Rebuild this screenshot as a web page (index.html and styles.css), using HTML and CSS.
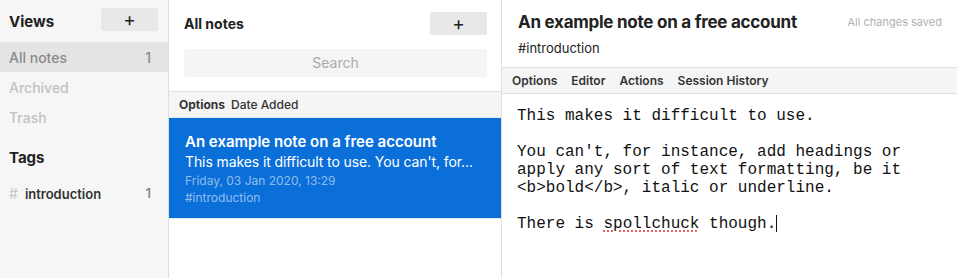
FILE: index.html
```html
<!DOCTYPE html>
<html lang="en">
<head>
    <meta charset="UTF-8">
    <title>Notes</title>
    <link rel="stylesheet" href="styles.css">
</head>
<body>
    <div class="sidebar">
        <div class="side-header">
            <h2>Views</h2>
            <button class="add-btn">+</button>
        </div>
        <div class="side-item active"><span>All notes</span><span class="count">1</span></div>
        <div class="side-item muted"><span>Archived</span></div>
        <div class="side-item muted"><span>Trash</span></div>
        <h2 class="tags-title">Tags</h2>
        <div class="side-item tag"><span><span class="hash">#</span>introduction</span><span class="count">1</span></div>
    </div>

    <div class="notes">
        <div class="notes-header">
            <div class="notes-title-row">
                <h2>All notes</h2>
                <button class="add-btn">+</button>
            </div>
            <div class="search">Search</div>
        </div>
        <div class="options-bar">
            <b>Options</b><span>Date Added</span>
        </div>
        <div class="note selected">
            <div class="note-title">An example note on a free account</div>
            <div class="note-preview">This makes it difficult to use. You can't, for...</div>
            <div class="note-date">Friday, 03 Jan 2020, 13:29</div>
            <div class="note-tag">#introduction</div>
        </div>
    </div>

    <div class="editor">
        <div class="editor-header">
            <div>
                <h1>An example note on a free account</h1>
                <div class="editor-tag">#introduction</div>
            </div>
            <div class="saved">All changes saved</div>
        </div>
        <div class="editor-menu">
            <span>Options</span><span>Editor</span><span>Actions</span><span>Session History</span>
        </div>
        <div class="editor-body">
            <p>This makes it difficult to use.</p>
            <p>You can't, for instance, add headings or<br>apply any sort of text formatting, be it<br>&lt;b&gt;bold&lt;/b&gt;, italic or underline.</p>
            <p>There is <span class="misspelled">spollchuck</span> though.<span class="caret"></span></p>
        </div>
    </div>
</body>
</html>
```

FILE: styles.css
```css
html, body {
    margin: 0;
    height: 100%;
}
body {
    display: flex;
    font-family: Inter, "Noto Sans", sans-serif;
    color: #222;
    background: #fff;
    overflow: hidden;
}
h1, h2, p {
    margin: 0;
}
.add-btn {
    width: 57px;
    height: 23px;
    border: none;
    border-radius: 2px;
    background-color: #e8e8e8;
    color: #222;
    font-family: inherit;
    font-size: 19px;
    line-height: 23px;
    padding: 0;
}

/* sidebar */
.sidebar {
    width: 168px;
    flex-shrink: 0;
    background-color: #f6f6f6;
    border-right: 1px solid #e0e0e0;
}
.side-header {
    display: flex;
    align-items: center;
    justify-content: space-between;
    height: 42px;
    padding: 0 10px 0 9px;
    box-sizing: border-box;
}
.side-header h2,
.tags-title {
    font-size: 15px;
    font-weight: 700;
}
.side-header .add-btn {
    margin-bottom: 3px;
}
.side-item {
    display: flex;
    justify-content: space-between;
    align-items: center;
    height: 30px;
    padding: 0 17px 0 9px;
    font-size: 14px;
    font-weight: 500;
}
.side-item.active {
    background-color: #e4e4e4;
    color: #8a8a8a;
}
.side-item.muted {
    color: #c2c2c2;
}
.side-item .count {
    color: #8a8a8a;
}
.tags-title {
    padding: 16px 9px 10px;
    line-height: 20px;
}
.side-item.tag {
    height: 30px;
    color: #333;
    font-weight: 600;
    font-size: 13px;
}
.hash {
    color: #c4c4c4;
    font-weight: 400;
    margin-right: 7px;
    font-size: 14px;
}

/* notes list */
.notes {
    width: 332px;
    flex-shrink: 0;
    border-right: 1px solid #e0e0e0;
}
.notes-header {
    padding: 12px 14px 14px 15px;
    border-bottom: 1px solid #e0e0e0;
}
.notes-title-row {
    display: flex;
    justify-content: space-between;
    align-items: center;
}
.notes-title-row h2 {
    font-size: 14px;
    font-weight: 700;
}
.search {
    margin-top: 14px;
    height: 28px;
    line-height: 28px;
    background-color: #f5f5f5;
    border-radius: 2px;
    text-align: center;
    color: #aaa;
    font-size: 14px;
}
.options-bar {
    display: flex;
    gap: 6px;
    align-items: center;
    height: 25px;
    padding: 0 10px;
    background-color: #f5f5f5;
    border-bottom: 1px solid #e6e6e6;
    font-size: 12px;
    color: #333;
}
.options-bar span {
    font-weight: 500;
}
.note {
    padding: 14px 16px 12px;
    border-bottom: 1px solid #e6e6e6;
}
.note.selected {
    background-color: #0b6fd9;
    color: #fff;
}
.note-title {
    font-size: 15px;
    font-weight: 600;
    line-height: 20px;
}
.note-preview {
    font-size: 14px;
    line-height: 20px;
    letter-spacing: -0.1px;
}
.note-date,
.note-tag {
    font-size: 12px;
    line-height: 17px;
    color: rgba(255, 255, 255, 0.55);
}

/* editor */
.editor {
    flex: 1;
    min-width: 0;
}
.editor-header {
    display: flex;
    justify-content: space-between;
    padding: 11px 15px 0 16px;
    height: 68px;
    box-sizing: border-box;
    border-bottom: 1px solid #e0e0e0;
}
.editor-header h1 {
    font-size: 17px;
    font-weight: 700;
    line-height: 22px;
    letter-spacing: -0.25px;
}
.editor-tag {
    font-size: 13px;
    line-height: 16px;
    margin-top: 7px;
}
.saved {
    font-size: 11px;
    color: #b0b0b0;
    padding-top: 4px;
}
.editor-menu {
    display: flex;
    gap: 14px;
    align-items: center;
    height: 25px;
    padding: 0 10px;
    background-color: #f5f5f5;
    border-bottom: 1px solid #e0e0e0;
    font-size: 12px;
    font-weight: 600;
    color: #333;
}
.editor-body {
    padding: 13px 15px;
    font-family: "Liberation Mono", "Courier New", monospace;
    font-size: 16px;
    line-height: 18px;
    color: #111;
}
.editor-body p {
    margin-bottom: 18px;
}
.misspelled {
    text-decoration: underline dotted #e04040;
    text-underline-offset: 3px;
}
.caret {
    display: inline-block;
    width: 1px;
    height: 17px;
    background-color: #111;
    vertical-align: -4px;
}
```
